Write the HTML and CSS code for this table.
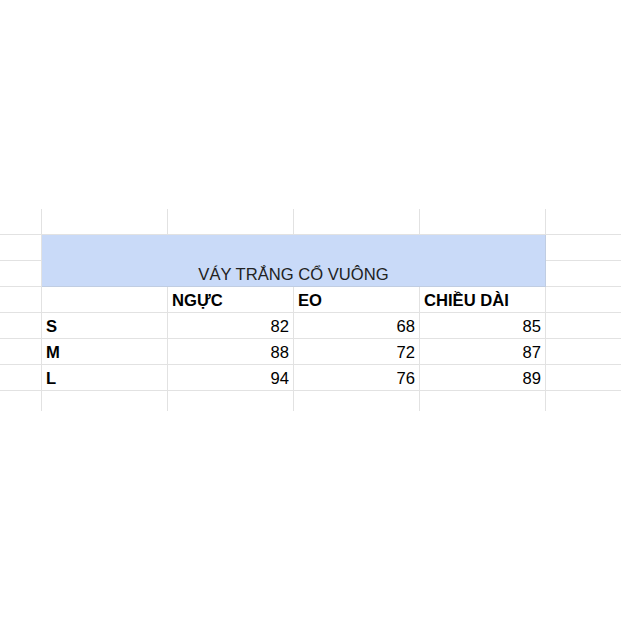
FILE: index.html
```html
<!DOCTYPE html>
<html>
<head>
<meta charset="utf-8">
<link rel="stylesheet" href="styles.css">
</head>
<body>
<div class="sheet">
  <div class="c"></div><div class="c"></div><div class="c"></div><div class="c"></div><div class="c"></div><div class="c last"></div>

  <div class="c"></div><div class="merged">VÁY TRẮNG CỔ VUÔNG</div><div class="c last"></div>
  <div class="c"></div><div class="c last"></div>

  <div class="c"></div><div class="c"></div><div class="c b">NGỰC</div><div class="c b">EO</div><div class="c b">CHIỀU DÀI</div><div class="c last"></div>

  <div class="c"></div><div class="c b">S</div><div class="c n">82</div><div class="c n">68</div><div class="c n">85</div><div class="c last"></div>
  <div class="c"></div><div class="c b">M</div><div class="c n">88</div><div class="c n">72</div><div class="c n">87</div><div class="c last"></div>
  <div class="c"></div><div class="c b">L</div><div class="c n">94</div><div class="c n">76</div><div class="c n">89</div><div class="c last"></div>

  <div class="c end"></div><div class="c end"></div><div class="c end"></div><div class="c end"></div><div class="c end"></div><div class="c end last"></div>
</div>
</body>
</html>
```

FILE: styles.css
```css
html, body {
  margin: 0;
  padding: 0;
  background: #ffffff;
}

.sheet {
  margin-top: 209px;
  display: grid;
  grid-template-columns: 42px 126px 126px 126px 126px 1fr;
  grid-template-rows: 26px 26px 26px 26px 26px 26px 26px 20px;
  font-family: "Liberation Sans", Arial, sans-serif;
  font-size: 16.6px;
  line-height: 19px;
  color: #000000;
}

.c {
  box-sizing: border-box;
  border-right: 1px solid #e2e2e2;
  border-bottom: 1px solid #e2e2e2;
  padding: 0 4px 2px 4px;
  display: flex;
  align-items: flex-end;
  white-space: nowrap;
  overflow: hidden;
}

.c.last {
  border-right: none;
}

.c.end {
  border-bottom: none;
}

.merged {
  grid-column: 2 / 6;
  grid-row: 2 / 4;
  box-sizing: border-box;
  background: #c9daf8;
  border-right: 1px solid #c0cde2;
  border-bottom: 1px solid #c0cde2;
  display: flex;
  align-items: flex-end;
  justify-content: center;
  padding-bottom: 2px;
  color: #222222;
}

.b {
  font-weight: bold;
}

.n {
  justify-content: flex-end;
}
```
